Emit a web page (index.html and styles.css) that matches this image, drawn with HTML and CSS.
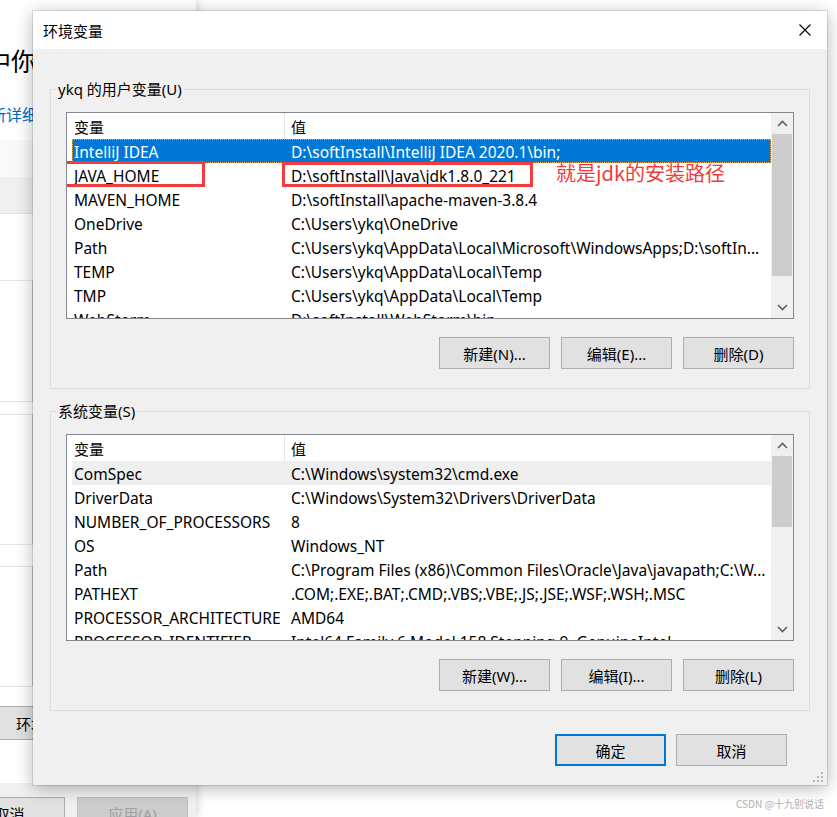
FILE: index.html
```html
<!DOCTYPE html>
<html lang="zh-CN">
<head>
  <meta charset="UTF-8" />
  <title>环境变量</title>
  <link rel="stylesheet" href="styles.css">
</head>
<body>

  <!-- window behind the dialog -->
  <div class="backwin">
    <div class="bw-title">中你的设</div>
    <div class="bw-link">重新详细信息</div>
    <div class="bw-pale"></div>
    <div class="bw-band"></div>
    <div class="bw-block h67"></div>
    <div class="bw-block h121 field"></div>
    <div class="bw-block h13"></div>
    <div class="bw-block h130 field"></div>
    <div class="bw-block h22"></div>
    <div class="bw-block h120 field"></div>
    <div class="bw-btnrow"><button class="btn bw-env">环境变量(N)...</button></div>
    <div class="bw-foot">
      <button class="btn bw-cancel">取消</button>
      <button class="btn" disabled>应用(A)</button>
    </div>
  </div>

  <!-- 环境变量 dialog -->
  <div class="dialog">
    <div class="titlebar">
      <span>环境变量</span>
      <span class="close">
        <svg width="12" height="12" viewBox="0 0 12 12"><path d="M0.5 0.5L11.5 11.5M11.5 0.5L0.5 11.5" stroke="#000" stroke-width="1.1" fill="none"/></svg>
      </span>
    </div>

    <div class="dlg-body">
      <fieldset class="group">
        <legend>ykq 的用户变量(U)</legend>
        <div class="listbox">
          <div class="rows">
            <div class="row head"><span class="c1">变量</span><span class="c2">值</span></div>
            <div class="row sel"><span class="c1">IntelliJ IDEA</span><span class="c2">D:\softInstall\IntelliJ IDEA 2020.1\bin;</span></div>
            <div class="row marked">
              <span class="c1">JAVA_HOME</span><span class="c2">D:\softInstall\Java\jdk1.8.0_221</span>
              <span class="mark mark-name"></span>
              <span class="mark mark-value"></span>
              <span class="note">就是jdk的安装路径</span>
            </div>
            <div class="row"><span class="c1">MAVEN_HOME</span><span class="c2">D:\softInstall\apache-maven-3.8.4</span></div>
            <div class="row"><span class="c1">OneDrive</span><span class="c2">C:\Users\ykq\OneDrive</span></div>
            <div class="row"><span class="c1">Path</span><span class="c2">C:\Users\ykq\AppData\Local\Microsoft\WindowsApps;D:\softIn...</span></div>
            <div class="row"><span class="c1">TEMP</span><span class="c2">C:\Users\ykq\AppData\Local\Temp</span></div>
            <div class="row"><span class="c1">TMP</span><span class="c2">C:\Users\ykq\AppData\Local\Temp</span></div>
            <div class="row"><span class="c1">WebStorm</span><span class="c2">D:\softInstall\WebStorm\bin</span></div>
          </div>
          <div class="scrollbar">
            <div class="sb-arrow"><svg width="11" height="7" viewBox="0 0 11 7"><path d="M1 6L5.5 1.5L10 6" stroke="#606060" stroke-width="1.6" fill="none"/></svg></div>
            <div class="sb-track"><div class="thumb thumb-user"></div></div>
            <div class="sb-arrow"><svg width="11" height="7" viewBox="0 0 11 7"><path d="M1 1L5.5 5.5L10 1" stroke="#606060" stroke-width="1.6" fill="none"/></svg></div>
          </div>
        </div>
        <div class="btn-row">
          <button class="btn">新建(N)...</button>
          <button class="btn">编辑(E)...</button>
          <button class="btn">删除(D)</button>
        </div>
      </fieldset>

      <fieldset class="group group-sys">
        <legend>系统变量(S)</legend>
        <div class="listbox">
          <div class="rows">
            <div class="row head"><span class="c1">变量</span><span class="c2">值</span></div>
            <div class="row hover"><span class="c1">ComSpec</span><span class="c2">C:\Windows\system32\cmd.exe</span></div>
            <div class="row"><span class="c1">DriverData</span><span class="c2">C:\Windows\System32\Drivers\DriverData</span></div>
            <div class="row"><span class="c1">NUMBER_OF_PROCESSORS</span><span class="c2">8</span></div>
            <div class="row"><span class="c1">OS</span><span class="c2">Windows_NT</span></div>
            <div class="row"><span class="c1">Path</span><span class="c2">C:\Program Files (x86)\Common Files\Oracle\Java\javapath;C:\W...</span></div>
            <div class="row"><span class="c1">PATHEXT</span><span class="c2">.COM;.EXE;.BAT;.CMD;.VBS;.VBE;.JS;.JSE;.WSF;.WSH;.MSC</span></div>
            <div class="row"><span class="c1">PROCESSOR_ARCHITECTURE</span><span class="c2">AMD64</span></div>
            <div class="row"><span class="c1">PROCESSOR_IDENTIFIER</span><span class="c2">Intel64 Family 6 Model 158 Stepping 9, GenuineIntel</span></div>
          </div>
          <div class="scrollbar">
            <div class="sb-arrow"><svg width="11" height="7" viewBox="0 0 11 7"><path d="M1 6L5.5 1.5L10 6" stroke="#606060" stroke-width="1.6" fill="none"/></svg></div>
            <div class="sb-track"><div class="thumb thumb-sys"></div></div>
            <div class="sb-arrow"><svg width="11" height="7" viewBox="0 0 11 7"><path d="M1 1L5.5 5.5L10 1" stroke="#606060" stroke-width="1.6" fill="none"/></svg></div>
          </div>
        </div>
        <div class="btn-row">
          <button class="btn">新建(W)...</button>
          <button class="btn">编辑(I)...</button>
          <button class="btn">删除(L)</button>
        </div>
      </fieldset>

      <div class="dlg-foot">
        <button class="btn btn-default">确定</button>
        <button class="btn">取消</button>
      </div>
    </div>

    <svg class="grip" width="10" height="10" viewBox="0 0 10 10" fill="#b4b4b4">
      <rect x="8" y="0" width="2" height="2"/>
      <rect x="4" y="4" width="2" height="2"/><rect x="8" y="4" width="2" height="2"/>
      <rect x="0" y="8" width="2" height="2"/><rect x="4" y="8" width="2" height="2"/><rect x="8" y="8" width="2" height="2"/>
    </svg>
  </div>

  <div class="watermark">CSDN @十九别说话</div>

</body>
</html>
```

FILE: styles.css
```css
* {
  box-sizing: border-box;
}

body {
  margin: 0;
  width: 837px;
  height: 817px;
  overflow: hidden;
  position: relative;
  background: #fff;
  font-family: "Noto Sans", "Noto Sans CJK SC", sans-serif;
  font-size: 15px;
  color: #000;
}

button {
  font-family: inherit;
}

.btn {
  width: 111px;
  height: 32px;
  padding: 0;
  background: #e1e1e1;
  border: 1px solid #adadad;
  font-size: 15px;
  color: #000;
  white-space: nowrap;
}

.btn:disabled {
  background: #cccccc;
  border-color: #bfbfbf;
  color: #a0a0a0;
}

/* ---------- window behind ---------- */
.backwin {
  position: absolute;
  left: 0;
  top: 0;
  width: 196px;
  height: 817px;
  background: #fff;
  overflow: hidden;
  box-shadow: 2px 0 8px rgba(0,0,0,0.15);
  display: flex;
  flex-direction: column;
}

.bw-title {
  margin: 46px 0 0 -14px;
  font-size: 25px;
  line-height: 30px;
  white-space: nowrap;
}

.bw-link {
  margin: 28px 0 0 -26px;
  font-size: 16px;
  line-height: 22px;
  color: #0067c0;
  white-space: nowrap;
}

.bw-pale {
  height: 37px;
  margin-top: 14px;
  background: #f9f9f9;
}

.bw-band {
  height: 37px;
  background: #f0f0f0;
  border-bottom: 1px solid #e3e3e3;
}

.bw-block {
  flex: none;
  border-bottom: 1px solid #e5e5e5;
}

.bw-block.field {
  border-right: 2px solid #d0d0d0;
  width: 34px;
}

.h13 { height: 13px; }
.h22 { height: 22px; }
.h67 { height: 67px; }
.h120 { height: 120px; }
.h121 { height: 121px; }
.h130 { height: 130px; }

.bw-btnrow {
  margin-top: 19px;
}

.bw-env {
  width: 200px;
  height: 34px;
  margin-left: -10px;
  padding-left: 25px;
  text-align: left;
}

.bw-foot {
  margin-top: auto;
  height: 34px;
  padding-top: 14px;
  background: #f0f0f0;
  display: flex;
  gap: 12px;
}

.bw-cancel {
  margin-left: -46px;
}

/* ---------- dialog ---------- */
.dialog {
  position: absolute;
  left: 33px;
  top: 11px;
  width: 794px;
  background: #f0f0f0;
  box-shadow: 0 0 0 1px rgba(0,0,0,0.1), 0 3px 16px rgba(0,0,0,0.3);
}

.titlebar {
  height: 38px;
  background: #fff;
  display: flex;
  align-items: center;
  justify-content: space-between;
  padding-left: 10px;
}

.close {
  width: 44px;
  height: 38px;
  display: flex;
  align-items: center;
  justify-content: center;
}

.dlg-body {
  padding: 30px 17px 19px;
}

.group {
  margin: 0;
  padding: 0 15px 19px;
  border: 1px solid #dcdcdc;
  min-width: 0;
}

.group legend {
  padding: 0 2px;
  margin-left: -10px;
  line-height: 20px;
}

.group-sys {
  margin-top: 12px;
}

.listbox {
  margin-top: 13px;
  height: 207px;
  border: 1px solid #828790;
  background: #fff;
  display: flex;
}

.rows {
  flex: 1;
  min-width: 0;
  padding-left: 5px;
  overflow: hidden;
}

.row {
  position: relative;
  display: flex;
  height: 24px;
  line-height: 24px;
  font-size: 15.5px;
  white-space: nowrap;
}

.row.head {
  height: 26px;
  line-height: 26px;
  font-size: 15px;
}

.c1 {
  flex: none;
  width: 213px;
  padding: 1px 0 0 2px;
  overflow: hidden;
}

.c2 {
  flex: 1;
  padding: 1px 0 0 6px;
  overflow: hidden;
}

.head .c1 {
  border-right: 1px solid #e5e5e5;
}

.row.sel {
  background: #0078d7;
  color: #fff;
  outline: 1px dotted #e9a447;
  outline-offset: -1px;
}

.row.hover {
  background: #efefef;
}

/* red annotation marks */
.mark {
  position: absolute;
  border: 3px solid #f23c3c;
}

.mark-name {
  left: -9px;
  top: -2px;
  width: 142px;
  height: 26px;
}

.mark-value {
  left: 210px;
  top: -1px;
  width: 251px;
  height: 25px;
}

.note {
  position: absolute;
  left: 484px;
  top: -14px;
  line-height: 48px;
  font-size: 20px;
  color: #f23c3c;
  font-family: "Noto Sans CJK SC", sans-serif;
}

.scrollbar {
  flex: none;
  width: 22px;
  background: #f0f0f0;
  display: flex;
  flex-direction: column;
}

.sb-arrow {
  height: 21px;
  display: flex;
  align-items: center;
  justify-content: center;
}

.sb-track {
  flex: 1;
  padding: 0 1px;
}

.thumb {
  background: #cdcdcd;
}

.thumb-user { height: 142px; }
.thumb-sys { height: 71px; }

.btn-row {
  display: flex;
  justify-content: flex-end;
  gap: 11px;
  margin-top: 18px;
}

.dlg-foot {
  display: flex;
  justify-content: flex-end;
  gap: 10px;
  margin-top: 23px;
  padding-right: 23px;
}

.btn-default {
  border: 2px solid #0078d7;
}

.grip {
  position: absolute;
  right: 4px;
  bottom: 3px;
}

.watermark {
  position: absolute;
  left: 736px;
  top: 796px;
  font-size: 10px;
  white-space: nowrap;
  color: #b0b0b0;
  font-family: "Noto Sans CJK SC", sans-serif;
}
```
